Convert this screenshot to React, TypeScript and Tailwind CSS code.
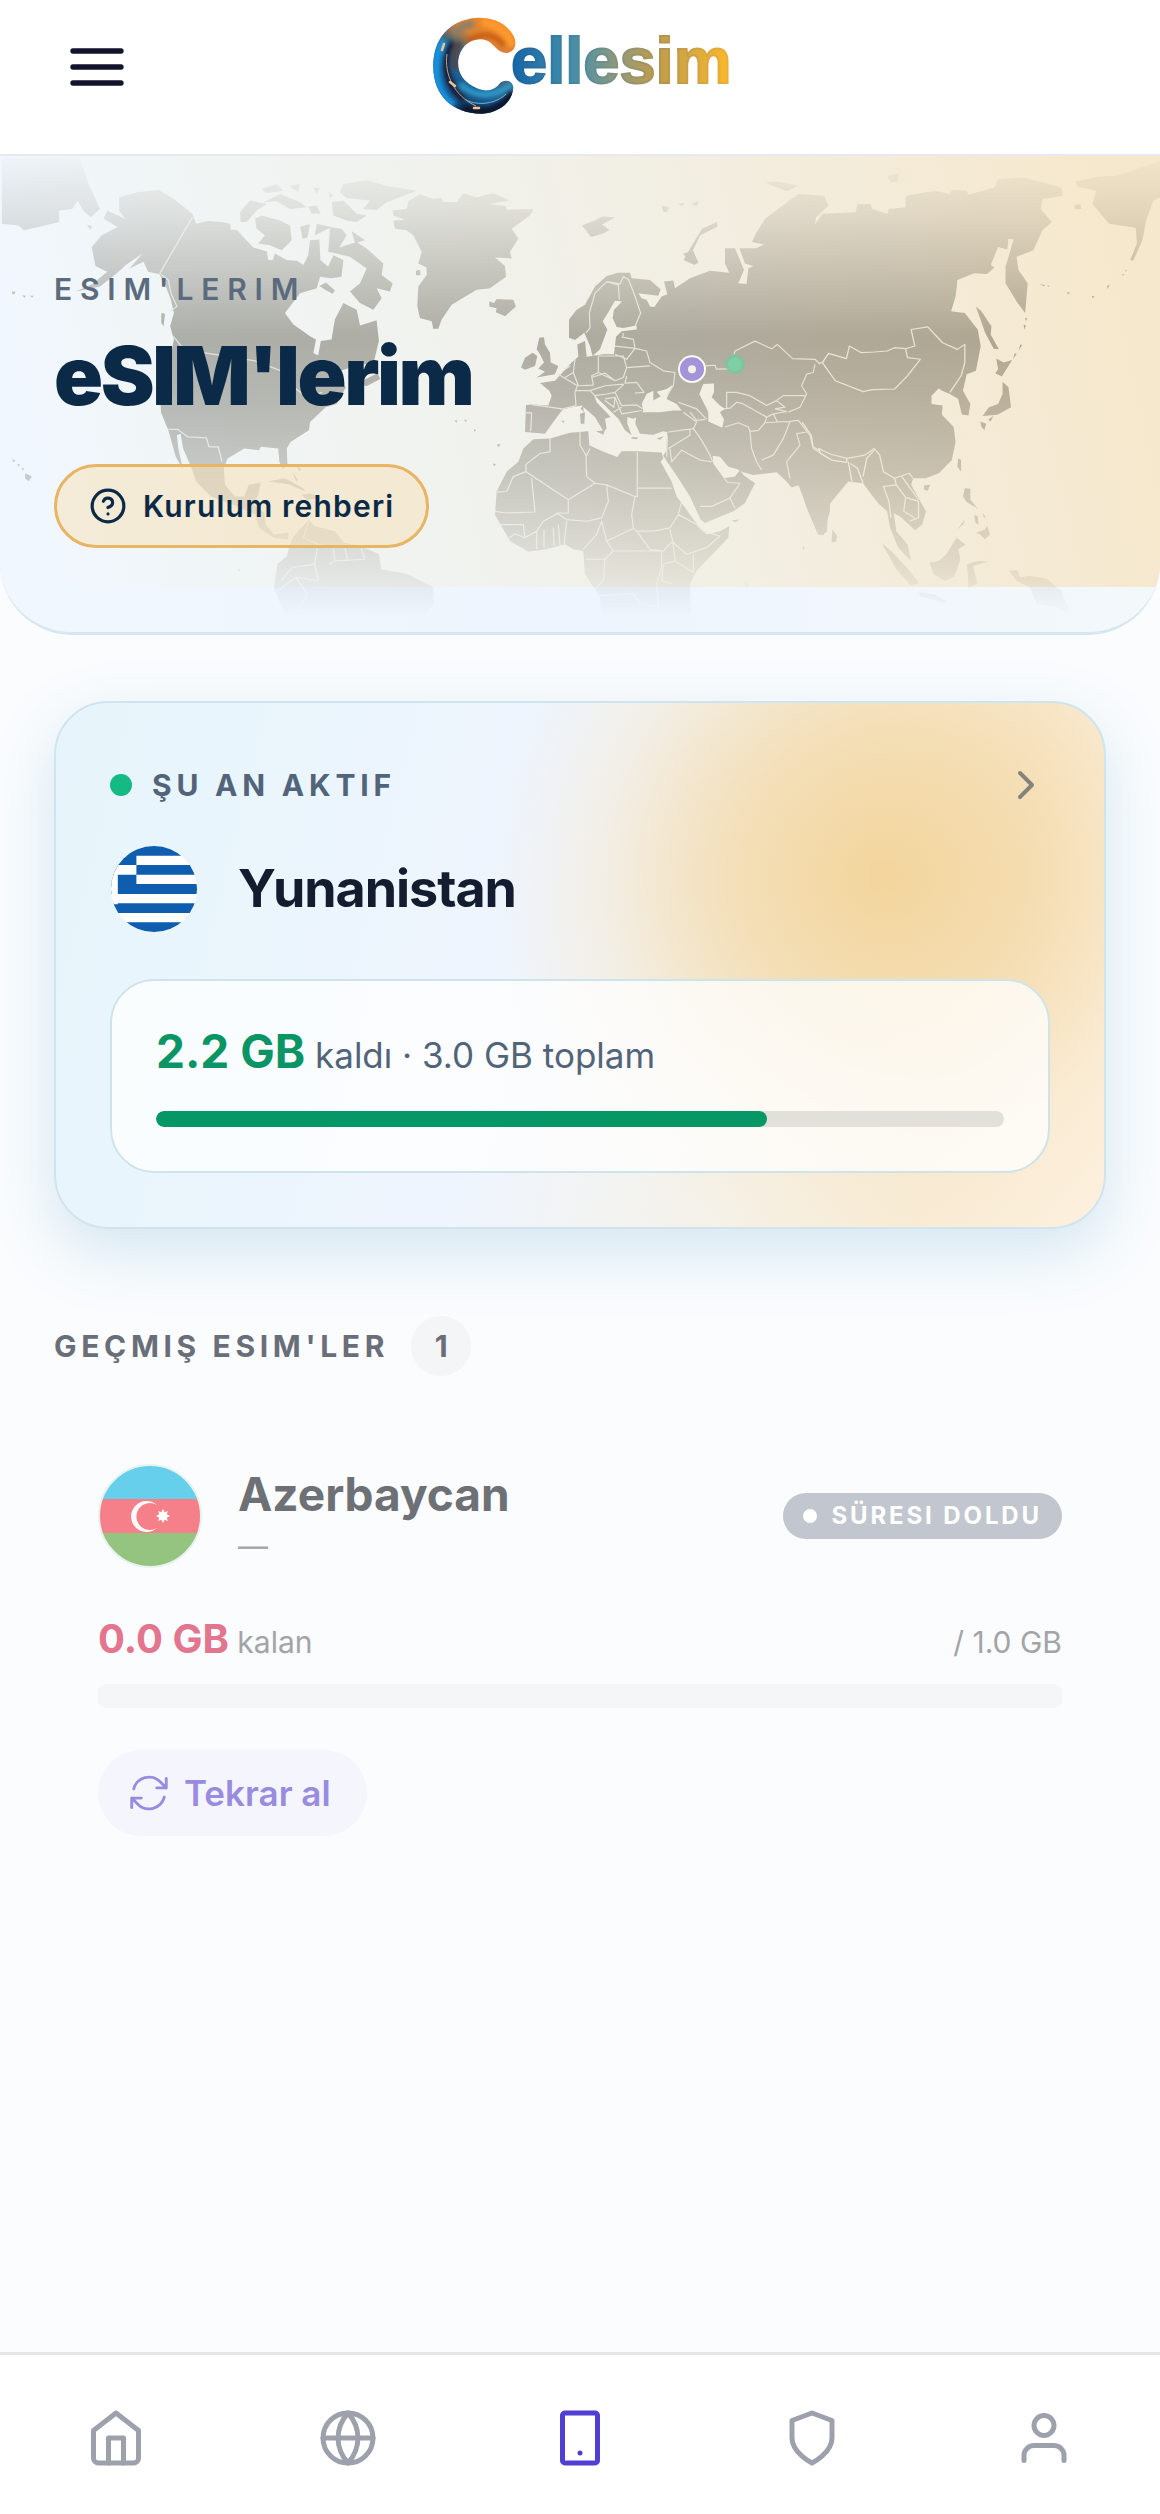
import React from "react";
import { CircleHelp, ChevronRight } from "lucide-react";

const LAND_WEST = [
  "M322 140L370 125L430 118L470 145L520 190L530 220L560 212L600 215L622 220L624 238L640 238L662 265L685 292L721 303L725 330L737 330L743 310L775 330L802 332L820 345L833 315L838 270L863 268L866 330L887 350L901 315L928 330L923 380L896 385L865 380L856 415L811 430L770 490L793 525L838 560L854 570L847 612L860 618L867 575L896 570L905 510L928 460L964 480L973 528L1018 512L1024 575L1010 640L960 650L900 672L880 710L920 700L935 715L910 765L880 775L838 820L835 845L785 880L775 900L777 950L765 962L755 940L752 900L705 895L700 905L660 900L615 930L605 960L608 1010L635 1045L660 1045L672 1010L705 1003L698 1040L685 1070L715 1095L718 1130L740 1160L780 1155L778 1175L740 1170L700 1140L690 1100L640 1075L570 1045L530 1000L518 960L495 900L488 855L478 860L482 900L495 965L475 925L455 845L435 790L433 740L445 650L465 600L470 570L460 530L470 490L462 450L445 400L430 372L400 365L388 335L350 355L385 310L340 345L310 375L270 410L205 425L250 402L290 365L258 348L248 290L275 255L318 230L280 205L290 180L338 205L322 180Z",
  "M5 20L215 20L240 100L270 175L245 200L225 180L210 150L195 175L160 180L160 215L65 240L50 225L5 220Z",
  "M790 1170L835 1115L850 1135L905 1150L930 1185L975 1195L1025 1220L1030 1265L1100 1280L1172 1320L1172 1370L1130 1430L1110 1460L790 1460L740 1320L750 1250L775 1225Z",
  "M725 1000L770 990L820 1020L825 1030L780 1008Z M815 1040L840 1036L868 1050L830 1056Z",
  "M436 490L446 492L442 530L436 520Z M970 700L1020 672L1028 690L990 712Z",
  "M235 222l14 6l-5 10z M68 975l18 10l-8 14l-10-8z M33 932l8 4l-4 6z M46 946l8 3l-4 6z M58 958l8 3l-4 6z M33 425l8 0l-2 8l-6 0z M60 436l10 2l-4 6z M80 438l10 0l-2 6z M1126 362l10 0l0 14l-10 0z M1228 815l8 0l-2 7z M1254 812l8 3l-4 5z M1280 842l7 2l-4 5z M1345 886l7 2l-4 5z M1333 945l7 2l-4 5z M1518 815l8 2l-4 6z M800 945l14 20l-6 2z M790 970l16 26l-6 2z M642 1264l6 0l-1 10z",
].join(" ");

const LAND_ARCTIC = [
  "M578 150L620 145L625 122L660 100L700 115L725 112L730 124L770 125L790 98L830 110L880 98L930 120L865 130L918 136L920 148L1000 145L990 165L935 205L955 235L930 275L935 295L885 292L915 318L918 350L870 385L830 390L755 435L725 480L715 508L700 508L695 485L660 475L652 440L655 380L680 345L680 322L655 310L665 275L640 225L620 210L585 205L580 180L615 178L580 165Z",
  "M868 425L882 430L890 418L940 420L948 440L915 470L888 458L890 446L868 440Z",
  "M385 275L390 200L425 205L440 225L418 262L470 245L500 265L550 310L545 345L578 370L570 395L530 385L545 415L520 450L480 430L450 395L480 370L500 325L450 290L400 278Z",
  "M165 175L185 165L240 180L270 195L275 240L245 270L210 255L175 250L195 225L170 205Z",
  "M120 155L150 120L200 130L170 150L140 185L122 185Z M300 200L330 190L322 232L308 235Z M350 190L395 200L345 225Z",
  "M325 138L350 135L362 160L335 160Z M395 125L430 120L470 160L500 165L470 185L440 180L400 165Z M455 212L495 240L465 248Z",
  "M430 70L500 58L560 75L650 90L600 110L560 125L530 148L490 145L510 120L440 112L420 95Z M185 85L230 70L250 90L200 98Z M268 75L300 70L295 95Z M190 125L240 100L300 125L320 140L270 145L230 122Z M340 80L360 82L350 100Z M385 92L400 105L390 112Z",
  "M358 378L378 368L405 392L398 402L375 390Z M648 332L660 330L660 345L648 345Z",
].join(" ");

const LAND_EUROPE = [
  "M237 265L237 210L260 180L285 165L315 110L350 78L385 68L420 68L425 85L480 90L512 118L505 138L445 130L455 145L470 150L480 170L493 172L515 140L532 133L522 95L550 92L555 115L600 85L660 62L718 68L705 40L705 -6L735 -6L750 30L762 60L745 100L770 102L775 55L790 48L765 40L748 -6L1020 -6L1020 790L1000 860L985 862L950 780L928 710L905 718L890 700L860 672L790 680L760 672L740 662L715 655L690 625L668 622L670 645L702 690L735 685L750 665L762 682L795 705L765 765L730 790L645 825L632 815L600 745L565 690L535 645L520 622L530 605L532 550L520 548L490 558L450 555L436 525L440 495L460 490L510 490L550 485L575 485L560 465L530 450L548 408L530 420L500 428L512 442L490 455L490 425L470 435L455 465L460 485L450 500L430 510L412 505L412 525L425 560L405 545L385 510L365 490L345 470L312 438L320 460L362 505L345 510L350 540L340 548L315 505L275 470L245 475L218 482L190 520L165 555L105 550L108 468L125 467L175 470L185 440L178 425L150 402L195 395L245 340L265 322L262 285L285 275L290 322L340 315L372 315L378 262L395 245L440 240L440 228L400 235L380 232L368 205L372 180L396 155L375 153L355 188L338 215L352 240L330 300L308 320L300 290L283 250L255 272Z",
  "M148 265L162 263L165 285L180 310L182 340L205 350L195 375L140 385L165 368L145 358L162 340L150 315L140 300Z M93 355L105 325L128 310L142 320L135 350L105 362Z",
  "M130 572L180 570L240 552L295 548L298 590L340 610L382 626L395 608L440 608L515 612L520 630L512 640L545 700L560 745L590 785L625 835L650 860L690 850L718 835L715 870L620 970L600 1010L605 1140L335 1140L330 1050L285 980L280 910L250 905L225 890L170 905L115 912L60 880L15 800L20 730L50 670L85 640L100 600Z",
  "M270 495L285 490L283 525L272 525Z M318 548L345 545L340 558Z M272 478L280 470L281 490Z M425 565L445 567L440 572L425 570Z M500 570L522 562L510 574Z M580 10L610 2L625 40L595 35Z M725 818L747 815L738 823Z M22 588l8 0l-2 6l-6 0z M8 645l10 3l-6 6z",
].join(" ");

const LAND_ASIA = [
  "M465 300L497 283L465 275L475 250L500 205L590 130L660 135L672 165L638 200L635 222L655 190L745 185L750 160L785 160L790 175L830 190L835 175L880 170L880 135L960 120L1000 130L1005 118L1045 120L1050 132L1120 110L1130 85L1200 80L1300 110L1305 135L1250 145L1245 175L1275 215L1250 240L1225 300L1180 320L1185 360L1210 400L1203 490L1180 455L1150 400L1150 350L1172 268L1158 265L1155 298L1130 290L1110 345L1120 352L1100 372L1065 370L1020 390L1015 440L1003 485L1040 490L1075 540L1083 590L1070 665L1045 675L1035 725L1055 765L1050 800L1032 797L1022 750L1000 735L978 725L970 718L950 740L950 765L980 770L978 798L1010 835L1015 880L1005 935L970 975L935 990L900 990L895 1010L920 1060L935 1090L925 1130L905 1147L870 1110L848 1095L855 1150L885 1190L895 1240L860 1200L838 1140L830 1090L805 1065L765 1005L725 1000L670 1075L668 1150L655 1163L640 1150L590 1010L500 900L470 700L475 400Z",
  "M370 215L330 235L300 290L280 330L310 345L320 335L303 305L325 255L372 228Z M5 225L40 210L60 198L95 200L60 222L80 240L60 250L30 260Z",
  "M1070 470L1085 485L1112 530L1110 555L1132 600L1118 598L1095 550Z M1125 628L1145 640L1168 632L1140 682L1122 672L1130 660Z M1142 698L1158 715L1165 775L1128 798L1088 802L1105 775L1130 765L1142 735Z M1082 818L1098 825L1093 845L1085 835Z M1103 812L1117 802L1110 818Z M1203 505l6 0l-4 10z M1199 525l6 2l-4 14z M1190 585l5 2l-10 18z M1175 612l5 2l-10 16z",
  "M1022 930L1030 935L1030 970L1020 955Z M930 1012L946 1010L940 1028L930 1025Z M1040 1020L1055 1022L1055 1055L1075 1082L1045 1062L1035 1045Z M1070 1155L1095 1145L1100 1132L1108 1160L1095 1175L1082 1160Z M1065 1100l10 5l2 25l-8-5z M1088 1095l8 10l-4 6z M1040 1115l-20 30l16-16z",
  "M945 1245L970 1240L990 1220L1018 1170L1042 1192L1022 1205L1028 1235L1012 1288L985 1300L955 1280Z M815 1185L850 1220L890 1270L917 1308L895 1315L855 1265Z M915 1335L960 1342L992 1362L985 1368L920 1348Z M1045 1250L1075 1240L1102 1242L1062 1256L1075 1310L1062 1315L1050 1322L1048 1275Z M1160 1270L1182 1268L1190 1290L1215 1285L1262 1295L1300 1330L1330 1410L1290 1380L1235 1370L1215 1320L1180 1300Z",
  "M682 1145L695 1165L692 1182L680 1184Z M1340 92L1400 78L1450 75L1568 30L1568 140L1550 150L1530 210L1520 270L1495 332L1487 330L1505 280L1502 232L1430 220L1385 160L1395 120L1345 108Z M1335 165L1352 160L1355 175L1338 176Z M500 95L530 92L590 105L560 122L520 105Z M830 75L862 68L858 92L838 95Z M220 165L240 170L236 185L225 184Z M265 158l18 0l-8 8z M300 160l20-8l-4 14z",
  "M1243 402l14 4l-4 4z M1262 406l8 2l-4 3z M1315 427l10 2l-6 5z M1383 438l8 2l-6 6z M1424 408l8-4l-6 14z M1465 372l6 0l-4 6z M1473 360l5 0l-3 7z M602 1195l6 4l-4 10z M446 1305l6 4l2 14z",
].join(" ");

const BORDERS_WEST =
  "M520 200L432 370L455 390L462 430L478 470L460 485 M468 560L490 590L550 610L690 635L760 665L800 720L830 745L870 730 M455 842L480 842L508 865L558 868L565 895L590 895L600 940 M835 1118L820 1170L860 1190L850 1250L790 1260L760 1300 M860 1190L900 1200L905 1240L890 1250 M905 1240L985 1235L975 1195 M940 1240L930 1190 M750 1330L800 1290L830 1340L800 1400 M850 1250L860 1300L800 1290";

const BORDERS_EUROPE =
  "M288 250L300 235L298 190L315 130L350 95L385 105L388 150 M350 95L390 102L400 80L415 88L430 125L452 190L435 230 M395 262L430 270L435 297L470 305L480 340L520 365L555 370L550 410L530 440 M325 320L400 320L410 355L400 385L375 395L325 370Z M375 290L435 297L410 330L375 315 M410 355L480 350 M255 330L250 370L265 410L310 408L305 380L325 370 M410 380L405 402L440 400L462 430L435 432 M210 482L258 470L255 430L262 410L205 375 M125 467L180 475L215 480 M108 492L125 492L122 548 M258 425L300 425L345 410L400 405 M305 385L345 372L375 395 M300 425L315 440L350 435L375 430L402 405 M345 450L375 445L372 475L345 455 M375 430L395 470L440 468L458 480 M375 445L395 495L455 485 M370 490L395 475 M400 250L398 265 M240 350L225 360 M250 370L225 385 M732 315L735 305L795 275L845 298L862 285L908 328L975 330L990 345 M640 350L675 348L680 360L735 358 M975 345L970 370L950 375L935 410L950 435L930 475L895 490 M710 480L710 430L740 430L780 440L830 470L860 455L880 440L945 440 M700 480L720 478L740 460L760 465L830 505L825 522L805 545L780 548L775 535L745 522L705 535 M855 480L890 488L850 495L862 520 M830 505L850 495 M860 455L885 475L855 480 M780 548L785 600L800 640L815 665 M825 522L900 518L890 545L880 570L850 620L815 635 M900 518L925 515L960 560L970 600L1020 632 M950 550L920 555L930 590L890 640L900 690 M535 550L610 540L620 520L580 490 M610 540L632 570L660 620L668 640 M535 600L560 585L600 560L600 540 M540 600L545 640L575 605L630 635L665 640 M630 775L665 775L720 750L750 705L712 702L700 685 M720 750L735 780 M565 460L620 480L650 512 M600 490L620 515L645 512 M532 560L530 625 M180 570L180 610L150 615L108 648L108 670L70 685L50 730L20 732 M108 670L235 755L315 705L290 685L288 620L270 590L270 550 M288 625L300 600 M315 705L350 710L435 745L442 745L442 610 M442 720L545 720 M435 745L425 800L430 840L440 850L490 850L540 840L565 800L575 760 M350 710L355 760L335 810L290 820L230 815L200 795L235 795L235 757 M125 690L135 792L50 795L15 790 M135 690L155 700 M335 820L350 880L430 842 M440 850L480 905L520 910L548 880L540 845 M565 800L620 830L640 850L690 865L650 900L590 920L550 885 M610 920L610 975 M20 830L100 830L105 870L140 850L160 820L200 798 M140 850L140 905 M162 845L162 900 M190 840L192 895 M205 830L210 895 M230 820L222 890 M45 880L75 858L105 870 M335 820L320 860L280 905 M350 880L370 910L515 910L515 960L500 1010 M370 910L345 935L285 935 M345 935L340 1000L310 1030 M548 880L555 940L520 950L515 1000L545 1010 M610 975L555 940 M500 1010L505 1080L450 1070L430 1040L330 1045";

const BORDERS_ASIA =
  "M655 640L672 612L720 628L728 590L760 610L795 608L830 605L850 595L880 598L885 625L920 630L885 680L850 720L790 722L765 728L690 695Z M645 642L655 640 M880 598L905 590L895 540L940 532L980 580L1020 600L1040 585L1040 640L1030 680L1000 730 M645 900L680 918L722 930L720 942L680 935L650 915Z M722 930L770 920L795 900L810 920L820 970L850 990L890 975L900 990 M725 940L735 1000 M765 1005L750 960L730 945 M765 985L775 930L795 905 M850 990L855 1010L820 1015L835 1060L840 1110 M855 1010L880 1048L915 1060L915 1110L890 1120 M870 985L915 1055 M880 1048L875 1090L905 1110 M600 820L625 860L630 895L645 905";

function WorldMap() {
  return (
    <svg
      aria-hidden="true"
      className="absolute inset-0 h-full w-full"
      viewBox="0 155 1160 480"
      preserveAspectRatio="none"
    >
      <defs>
        <linearGradient id="land-fade" x1="0" x2="0" y1="155" y2="635" gradientUnits="userSpaceOnUse">
          <stop offset="0" stopColor="#1d1806" stopOpacity="0.01" />
          <stop offset="0.12" stopColor="#1d1806" stopOpacity="0.09" />
          <stop offset="0.38" stopColor="#1d1806" stopOpacity="0.32" />
          <stop offset="0.5" stopColor="#1d1806" stopOpacity="0.28" />
          <stop offset="0.7" stopColor="#1d1806" stopOpacity="0.18" />
          <stop offset="0.86" stopColor="#1d1806" stopOpacity="0.08" />
          <stop offset="0.97" stopColor="#1d1806" stopOpacity="0" />
        </linearGradient>
        <mask id="land" maskUnits="userSpaceOnUse" x="0" y="155" width="1160" height="480">
          <g fill="#fff" stroke="none">
            <path transform="translate(0 150) scale(0.37 0.3333)" d={LAND_WEST} />
            <path transform="translate(200 160) scale(0.3333)" d={LAND_ARCTIC} />
            <path transform="translate(490 250) scale(0.3333)" d={LAND_EUROPE} />
            <path transform="translate(580 150) scale(0.37 0.3333)" d={LAND_ASIA} />
          </g>
          <path
            transform="translate(490 250) scale(0.3333)"
            fill="#000"
            d="M640 405L672 403L672 430L665 445L690 470L705 480L690 490L702 512L697 537L655 518L655 490L628 435Z"
          />
          <g fill="none" stroke="#444" strokeWidth="3.6" strokeLinejoin="round">
            <path transform="translate(0 150) scale(0.37 0.3333)" d={BORDERS_WEST} />
            <path transform="translate(490 250) scale(0.3333)" d={BORDERS_EUROPE} stroke="#333" />
            <path transform="translate(580 150) scale(0.37 0.3333)" d={BORDERS_ASIA} stroke="#222" />
          </g>
        </mask>
      </defs>
      <rect x="0" y="155" width="1160" height="480" fill="url(#land-fade)" mask="url(#land)" />
      <circle cx="735" cy="365" r="10" fill="#74c79d" fillOpacity="0.75" />
      <circle cx="735" cy="365" r="7" fill="#7ecfa6" />
      <circle cx="692" cy="370" r="14" fill="#fbf9f6" />
      <circle cx="692" cy="370" r="12" fill="#a393d8" />
      <circle cx="692" cy="370" r="4" fill="#f4f0ea" />
    </svg>
  );
}

function Logo() {
  return (
    <svg viewBox="0 0 320 130" className="h-[130px] w-80" role="img" aria-label="Cellesim">
      <defs>
        <linearGradient id="word" x1="92" x2="309" y1="0" y2="0" gradientUnits="userSpaceOnUse">
          <stop offset="0" stopColor="#1565a8" />
          <stop offset="0.25" stopColor="#3f8bab" />
          <stop offset="0.4" stopColor="#6f9690" />
          <stop offset="0.52" stopColor="#9c9a70" />
          <stop offset="0.65" stopColor="#bd9c4c" />
          <stop offset="0.82" stopColor="#d9a83f" />
          <stop offset="1" stopColor="#fbb829" />
        </linearGradient>
        <linearGradient id="word-edge" x1="92" x2="309" y1="0" y2="0" gradientUnits="userSpaceOnUse">
          <stop offset="0" stopColor="#1a619f" />
          <stop offset="0.3" stopColor="#4689a0" />
          <stop offset="0.5" stopColor="#89947a" />
          <stop offset="0.7" stopColor="#b3954f" />
          <stop offset="1" stopColor="#eab03a" />
        </linearGradient>
        <linearGradient id="cee" x1="90" x2="35" y1="25" y2="110" gradientUnits="userSpaceOnUse">
          <stop offset="0" stopColor="#f58a1c" />
          <stop offset="0.28" stopColor="#d9803a" />
          <stop offset="0.45" stopColor="#4a6470" />
          <stop offset="0.7" stopColor="#1d5f95" />
          <stop offset="1" stopColor="#12375f" />
        </linearGradient>
        <filter id="soft" x="-20%" y="-20%" width="140%" height="140%">
          <feGaussianBlur stdDeviation="2.2" />
        </filter>
        <clipPath id="cee-clip">
          <path d="M83 52.600C95 55 98 43 93 35C85 22 72 17.300 57 17.700C28 20 12.700 40 13.300 68C14 95 32 114 62 113.700C78 113 92 103 93.300 88C93 80 85 79 80 83C75 90 67 92.700 57 88.300C43 82 37 72 38.300 60C40 47 50 38 62 39.300C72 40 75 50 83 52.600Z" />
        </clipPath>
      </defs>
      <g clipPath="url(#cee-clip)">
        <rect width="110" height="130" fill="url(#cee)" />
        <g filter="url(#soft)" fill="none">
          <path d="M24 40C10 62 14 92 34 106" stroke="#1590dc" strokeWidth="9" />
          <path d="M32 42C20 62 26 84 44 100" stroke="#141d38" strokeWidth="7" />
          <path d="M40 84C54 98 74 98 92 84" stroke="#2f9bcd" strokeWidth="6" />
          <path d="M42 108C60 116 82 112 94 92" stroke="#10152f" strokeWidth="10" />
          <path d="M48 42C58 33 76 32 84 46" stroke="#c75a08" strokeWidth="5" />
          <path d="M62 22C78 24 90 34 92 46" stroke="#ff9a2e" strokeWidth="8" />
          <path d="M40 42C34 52 34 62 36 70" stroke="#5b3a33" strokeWidth="4" />
          <path d="M34 34C40 26 48 24 54 24" stroke="#8a8069" strokeWidth="7" />
        </g>
        <path d="M27 54C24 74 34 96 56 106" stroke="#c9a27b" strokeWidth="1" fill="none" />
        <path d="M30 82l5 4M54 108l5 0M22 50l2-6" stroke="#f3c08e" strokeWidth="2.500" strokeLinecap="round" />
        <path d="M46 100C58 106 76 104 86 94" stroke="#69b9dc" strokeWidth="1" fill="none" />
      </g>
      <text
        x="91"
        y="83"
        fill="url(#word)"
        stroke="url(#word-edge)"
        strokeWidth="2"
        className="font-['Liberation_Sans',Arial,sans-serif] text-[65px] font-bold"
      >
        ellesim
      </text>
    </svg>
  );
}

function GreekFlag() {
  return (
    <svg viewBox="0 0 90 90" className="size-[88px] shrink-0" role="img" aria-label="Yunanistan bayrağı">
      <clipPath id="gr">
        <circle cx="45" cy="45" r="44" />
      </clipPath>
      <g clipPath="url(#gr)">
        <rect width="90" height="90" fill="#fff" />
        <path
          fill="#0f5dae"
          d="M0 0h90v11H0zM0 20.500h90v10H0zM0 40h90v10H0zM0 59.500h90v10H0zM0 79h90v11H0z"
        />
        <rect width="27" height="50" fill="#0f5dae" />
        <path fill="#fff" d="M0 20.500h27v10H0zM0 20.500h8v40H0z" />
      </g>
    </svg>
  );
}

function AzerbaijanFlag() {
  return (
    <svg viewBox="0 0 104 104" className="size-[104px] shrink-0" role="img" aria-label="Azerbaycan bayrağı">
      <clipPath id="az">
        <circle cx="52" cy="52" r="51" />
      </clipPath>
      <g clipPath="url(#az)">
        <rect width="104" height="35" fill="#66cfeb" />
        <rect y="35" width="104" height="34" fill="#f5808a" />
        <rect y="69" width="104" height="35" fill="#94c47f" />
      </g>
      <circle cx="52" cy="52" r="51" fill="none" stroke="#e8f3f1" strokeWidth="2" />
      <path fill="#fff" fillOpacity="0.95" d="M59 41a15.500 15.500 0 1 0 0 23a13.500 13.500 0 1 1 0-23z" />
      <path
        fill="#fff"
        d="M65 45l1.700 3.300l3.300-1.300l-1.300 3.300l3.300 1.700l-3.300 1.700l1.300 3.300l-3.300-1.300l-1.700 3.300l-1.700-3.300l-3.300 1.300l1.300-3.300l-3.300-1.700l3.300-1.700l-1.300-3.300l3.300 1.300z"
      />
    </svg>
  );
}

const NAV_ITEMS = [
  {
    label: "Ana sayfa",
    active: false,
    icon: (
      <>
        <path d="M3 9l9-7 9 7v11a2 2 0 0 1-2 2H5a2 2 0 0 1-2-2z" />
        <polyline points="9 22 9 12 15 12 15 22" />
      </>
    ),
  },
  {
    label: "Mağaza",
    active: false,
    icon: (
      <>
        <circle cx="12" cy="12" r="10" />
        <path d="M2 12h20" />
        <path d="M12 2a15.300 15.300 0 0 1 4 10 15.300 15.300 0 0 1-4 10 15.300 15.300 0 0 1-4-10 15.300 15.300 0 0 1 4-10z" />
      </>
    ),
  },
  {
    label: "eSIM'lerim",
    active: true,
    icon: (
      <>
        <rect x="5" y="2" width="14" height="20" rx="1" />
        <path d="M12 18h.01" />
      </>
    ),
  },
  { label: "Güvenlik", active: false, icon: <path d="M12 22s8-4 8-10V5l-8-3-8 3v7c0 6 8 10 8 10z" /> },
  {
    label: "Profil",
    active: false,
    icon: (
      <>
        <path d="M20 21v-2a4 4 0 0 0-4-4H8a4 4 0 0 0-4 4v2" />
        <circle cx="12" cy="7" r="4" />
      </>
    ),
  },
];

export default function App() {
  return (
    <div className="flex min-h-screen flex-col bg-[#fafcfe] font-['Inter',sans-serif] text-[30px] leading-[44px]">
      <header className="grid grid-cols-[1fr_auto_1fr] items-start border-b-2 border-[#e6eaee] bg-white pb-6">
        <button type="button" aria-label="Menü" className="mt-[35px] ml-[65px] w-16 text-[#12142b]">
          <svg
            aria-hidden="true"
            viewBox="0 0 24 24"
            className="size-16 fill-none stroke-current stroke-2"
            strokeLinecap="round"
          >
            <path d="M3 6h18M3 12h18M3 18h18" />
          </svg>
        </button>
        <a href="#home" aria-label="Cellesim">
          <Logo />
        </a>
      </header>

      <main className="flex-1">
        <section className="relative overflow-hidden rounded-b-[72px] border-b-[3px] border-[#d5e7f0] bg-linear-to-r from-[#f1f7fe] via-[#eff5fe] to-[#f3f8fb] px-[54px] pt-[111px] pb-[84px]">
          <div className="absolute inset-x-0 top-0 bottom-[45px] bg-[linear-gradient(78deg,#f1f7fe_4%,#f0f5f5_20%,#f1f2ed_42%,#f2efe4_58%,#f4ebd8_78%,#f6e8cc_96%)]" />
          <WorldMap />
          <div className="relative">
            <p className="font-semibold tracking-[0.26em] text-[#5b6b7d]">ESIM'LERIM</p>
            <h1 className="mt-5 text-[81px] leading-[90px] font-black tracking-[-0.03em] text-[#0b2a48]">
              eSIM'lerim
            </h1>
            <button
              type="button"
              className="mt-[43px] flex h-[84px] items-center gap-4 rounded-full border-[3px] border-[#e8b565] bg-[#f7dfb3]/50 pr-8 pl-8 font-semibold tracking-[0.04em] text-[#0b2a48]"
            >
              <CircleHelp size={38} strokeWidth={2} />
              Kurulum rehberi
            </button>
          </div>
        </section>

        <div className="px-[54px]">
          <article className="mt-[66px] rounded-[54px] border-2 border-[#cfe4ee] bg-[radial-gradient(ellipse_38%_74%_at_79%_33%,rgba(243,212,153,0.95)_0%,rgba(243,215,163,0.7)_38%,rgba(246,227,192,0.3)_72%,rgba(246,227,192,0)_100%),linear-gradient(104deg,#e6f5fb_0%,#eff5fe_44%,#f5f2ea_66%,#f9ecd6_84%,#fdf0de_100%)] p-[54px] shadow-[0_22px_60px_rgba(120,175,205,0.28)]">
            <div className="flex h-14 items-center gap-5">
              <span className="size-[22px] rounded-full bg-[#14b983]" />
              <h2 className="flex-1 font-bold tracking-[0.16em] text-[#526479]">ŞU AN AKTIF</h2>
              <a href="#yunanistan" aria-label="Yunanistan ayrıntıları" className="text-[#84847c]">
                <ChevronRight size={48} strokeWidth={2} />
              </a>
            </div>
            <div className="mt-8 flex items-center gap-10">
              <GreekFlag />
              <h3 className="text-[52px] leading-[72px] font-bold tracking-[-0.02em] text-[#141c30]">Yunanistan</h3>
            </div>
            <div className="mt-[46px] rounded-[44px] border-2 border-[#cfe4ea] bg-white/75 px-11 pt-[42px] pb-11">
              <p className="h-14 text-[35px] leading-[56px] text-[#526479]">
                <strong className="text-[46px] font-bold text-[#0b9565]">2.2 GB</strong> kaldı · 3.0 GB toplam
              </p>
              <div className="mt-8 h-4 overflow-hidden rounded-full bg-[#e2e0da]">
                <div className="h-full w-[72%] rounded-full bg-[#059766]" />
              </div>
            </div>
          </article>

          <section>
            <div className="mt-[87px] flex items-center gap-[22px]">
              <h2 className="font-bold tracking-[0.155em] text-[#696e79]">GEÇMIŞ ESIM'LER</h2>
              <span className="flex size-[60px] items-center justify-center rounded-full bg-[#f4f5f7] font-bold text-[#696e79]">
                1
              </span>
            </div>

            <article className="mt-[88px] px-11">
              <div className="flex items-center gap-9">
                <AzerbaijanFlag />
                <div className="flex-1">
                  <h3 className="text-[46px] leading-[60px] font-bold text-[#6d7074]">Azerbaycan</h3>
                  <p className="text-[#a6a8ab]">—</p>
                </div>
                <span className="flex h-[46px] items-center gap-[14px] rounded-full bg-[#c2c6ce] pr-5 pl-5 text-[24px] font-bold tracking-[0.12em] text-white">
                  <span className="size-[14px] rounded-full bg-white" />
                  SÜRESI DOLDU
                </span>
              </div>
              <div className="mt-[43px] flex items-baseline justify-between text-[#a2a4a7]">
                <p className="leading-[56px]">
                  <strong className="text-[40px] font-bold text-[#e3768f]">0.0 GB</strong> kalan
                </p>
                <p>/ 1.0 GB</p>
              </div>
              <div className="mt-[14px] h-6 rounded-lg bg-[#f5f6f8]" />
              <button
                type="button"
                className="mt-[42px] flex h-[86px] items-center gap-3 rounded-full bg-[#f5f5fe] pr-9 pl-7 text-[35px] font-semibold text-[#998ce0]"
              >
                <svg
                  aria-hidden="true"
                  viewBox="0 0 24 24"
                  className="size-[46px] fill-none stroke-current stroke-[1.5]"
                  strokeLinecap="round"
                  strokeLinejoin="round"
                >
                  <path d="M16.023 9.348h4.992v-.001M2.985 19.644v-4.992m0 0h4.992m-4.993 0 3.181 3.183a8.250 8.250 0 0 0 13.803-3.700M4.031 9.865a8.250 8.250 0 0 1 13.803-3.700l3.181 3.182m0-4.991v4.990" />
                </svg>
                Tekrar al
              </button>
            </article>
          </section>
        </div>
      </main>

      <nav className="grid h-[162px] grid-cols-5 border-t-[3px] border-[#e3e5e8] bg-white pt-[53px]">
        {NAV_ITEMS.map((item) => (
          <a
            key={item.label}
            href={"#" + item.label}
            aria-label={item.label}
            aria-current={item.active ? "page" : undefined}
            className={item.active ? "flex justify-center text-[#4f3fd2]" : "flex justify-center text-[#9ca1ac]"}
          >
            <svg
              viewBox="0 0 24 24"
              className="size-[60px] fill-none stroke-current stroke-2"
              strokeLinecap="round"
              strokeLinejoin="round"
            >
              {item.icon}
            </svg>
          </a>
        ))}
      </nav>
    </div>
  );
}
